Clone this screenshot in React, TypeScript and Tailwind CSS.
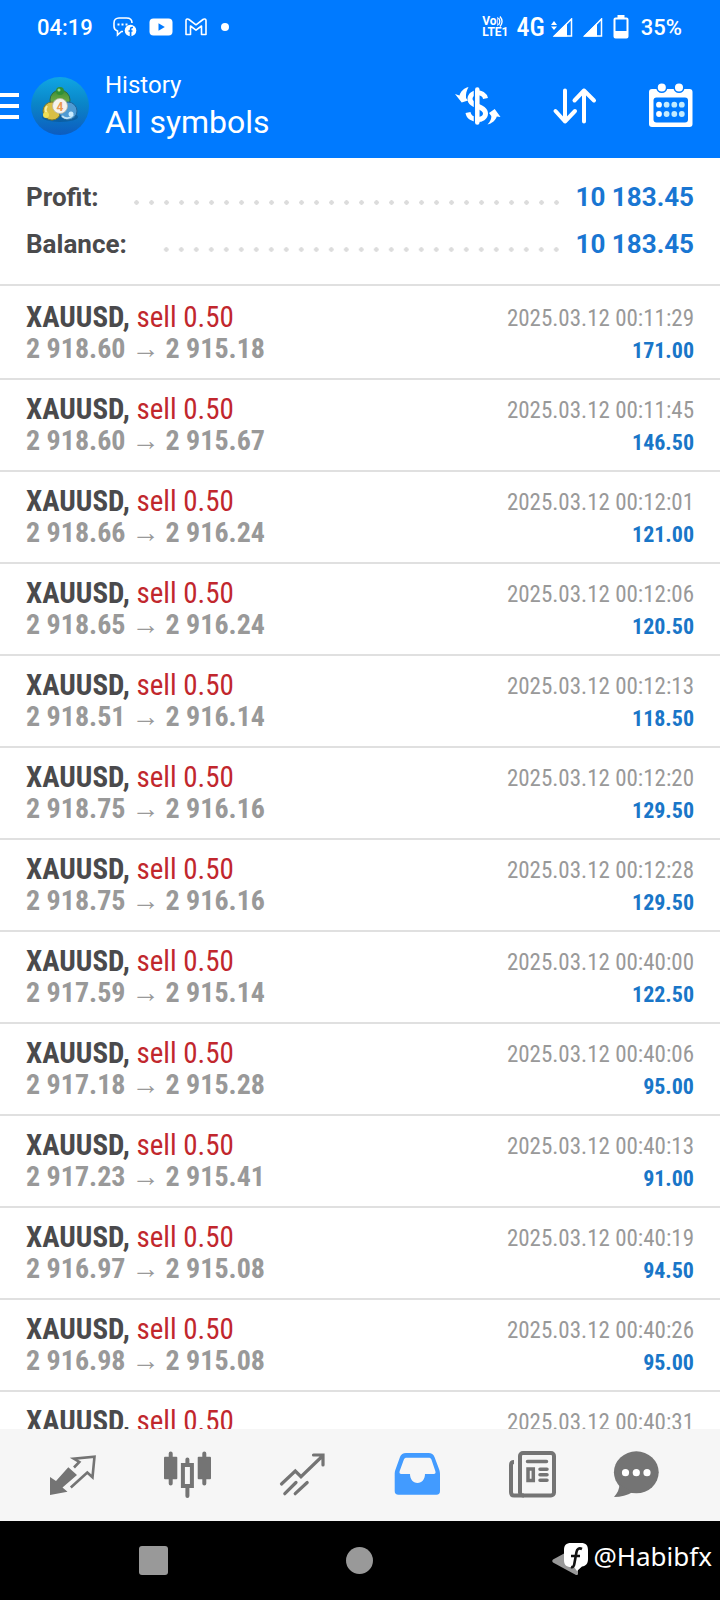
import type {ReactNode} from "react";

const deals = [
    {open: "2 918.60", close: "2 915.18", time: "2025.03.12 00:11:29", profit: "171.00"},
    {open: "2 918.60", close: "2 915.67", time: "2025.03.12 00:11:45", profit: "146.50"},
    {open: "2 918.66", close: "2 916.24", time: "2025.03.12 00:12:01", profit: "121.00"},
    {open: "2 918.65", close: "2 916.24", time: "2025.03.12 00:12:06", profit: "120.50"},
    {open: "2 918.51", close: "2 916.14", time: "2025.03.12 00:12:13", profit: "118.50"},
    {open: "2 918.75", close: "2 916.16", time: "2025.03.12 00:12:20", profit: "129.50"},
    {open: "2 918.75", close: "2 916.16", time: "2025.03.12 00:12:28", profit: "129.50"},
    {open: "2 917.59", close: "2 915.14", time: "2025.03.12 00:40:00", profit: "122.50"},
    {open: "2 917.18", close: "2 915.28", time: "2025.03.12 00:40:06", profit: "95.00"},
    {open: "2 917.23", close: "2 915.41", time: "2025.03.12 00:40:13", profit: "91.00"},
    {open: "2 916.97", close: "2 915.08", time: "2025.03.12 00:40:19", profit: "94.50"},
    {open: "2 916.98", close: "2 915.08", time: "2025.03.12 00:40:26", profit: "95.00"},
    {open: "", close: "", time: "2025.03.12 00:40:31", profit: ""},
];

function StatusBar() {
    return (
        <div className="flex h-[54px] items-center justify-between pl-[37px] pr-[38px] text-[22px] font-medium">
            <div className="flex items-center">
                <span>04:19</span>
                <svg className="ml-5" width="24" height="20" viewBox="0 0 24 20" fill="none">
                    <path d="M10 14.500H8.500L4.500 18v-4C2 13 1 12 1 9.500V6C1 3 3 1 6 1h7.500C17 1 19 3 19 6"
                          stroke="#fff" strokeWidth="1.600"/>
                    <path d="M4.500 7.500h2M8.500 7.500h2M12.500 7.500h2" stroke="#fff" strokeWidth="2"/>
                    <circle cx="17.500" cy="13.500" r="5.800" fill="#fff"/>
                    <path d="M20 10.500h-1c-1 0-1.400.6-1.400 1.500v7M15.500 14h4" stroke="#007aff" strokeWidth="1.700"/>
                </svg>
                <svg className="ml-3" width="24" height="18" viewBox="0 0 24 18">
                    <rect x="0.500" y="0.500" width="23" height="17" rx="4" fill="#fff"/>
                    <path d="M9.500 5.200v7.600l6.300-3.800z" fill="#007aff"/>
                </svg>
                <svg className="ml-3" width="22" height="18" viewBox="0 0 22 18" fill="none">
                    <path d="M1 2.500C1 1 2.800.6 4 1.500l7 5.300 7-5.300c1.200-.9 3-.5 3 1V16.500h-4.500V8L11 12.200 5.500 8v8.500H1z"
                          stroke="#fff" strokeWidth="1.600" strokeLinejoin="round"/>
                </svg>
                <span className="ml-3.5 size-2 rounded-full bg-white"/>
            </div>
            <div className="flex items-center">
                <span className="flex flex-col text-[12px] leading-[11px] font-bold">
                    <span className="flex items-center">
                        Vo
                        <svg width="6" height="11" viewBox="0 0 6 11" fill="none" stroke="#fff" strokeWidth="1.300">
                            <path d="M0 1v9M1.500 2c1.500 2 1.500 5 0 7M3 .5c2.500 3 2.500 7 0 10"/>
                        </svg>
                    </span>
                    <span>LTE1</span>
                </span>
                <span className="ml-2 font-['Roboto_Condensed','Roboto',sans-serif] text-[26px] leading-7">4G</span>
                <svg className="ml-1.5" width="22" height="19" viewBox="0 0 22 19">
                    <path d="M3 3l3 4H0zM3 12L0 8.500h6z" fill="#fff"/>
                    <path d="M3.500 18L20.500 1v17z" fill="none" stroke="#fff" strokeWidth="1.500"/>
                    <path d="M2 18.500L16 5v13.500z" fill="#fff"/>
                </svg>
                <svg className="ml-2.5" width="20" height="19" viewBox="0 0 20 19">
                    <path d="M2 18L18.500 1v17z" fill="none" stroke="#fff" strokeWidth="1.500"/>
                    <path d="M0 18.500L14 5v13.500z" fill="#fff"/>
                </svg>
                <svg className="ml-2.5" width="16" height="24" viewBox="0 0 16 24">
                    <path d="M4.500 0h7v3h-7z" fill="#fff"/>
                    <rect x="1.500" y="3.500" width="13" height="19" rx="1" fill="none" stroke="#fff" strokeWidth="2"/>
                    <path d="M1.500 16h13v6.500h-13z" fill="#fff"/>
                </svg>
                <span className="ml-3">35%</span>
            </div>
        </div>
    );
}

function Logo() {
    return (
        <svg className="ml-[11px] shrink-0" width="60" height="60" viewBox="0 0 60 60">
            <defs>
                <linearGradient id="disc" x1="0" y1="0" x2="0" y2="1">
                    <stop offset="0" stopColor="#10a6e4"/>
                    <stop offset="0.45" stopColor="#0a86c8"/>
                    <stop offset="1" stopColor="#0d5cc0"/>
                </linearGradient>
                <linearGradient id="green" x1="0" y1="0" x2="0" y2="1">
                    <stop offset="0" stopColor="#3f8c32"/>
                    <stop offset="1" stopColor="#8cc152"/>
                </linearGradient>
            </defs>
            <circle cx="30" cy="30" r="29" fill="url(#disc)"/>
            <ellipse cx="30" cy="41" rx="18" ry="5" fill="#0a4f86" opacity="0.5"/>
            <circle cx="30" cy="24" r="10" fill="url(#green)" stroke="#2c6e45"/>
            <circle cx="22" cy="35" r="9" fill="#d8bf45" stroke="#7c7a2c"/>
            <circle cx="38" cy="35" r="9" fill="#4f9bd3" stroke="#21659b"/>
            <path d="M32 40c3 3 8 3 11-1" fill="none" stroke="#bfe3f7" strokeWidth="2"/>
            <path d="M17 30c-2 3-2 5 0 7" fill="none" stroke="#f7eda0" strokeWidth="2"/>
            <circle cx="30" cy="15" r="4" fill="#2f8f36"/>
            <circle cx="29" cy="14" r="1.500" fill="#9bd98b"/>
            <circle cx="16" cy="39" r="3" fill="#f0df55"/>
            <circle cx="41" cy="38" r="2.500" fill="#c9ecff"/>
            <circle cx="30" cy="30" r="7.500" fill="#f5f3ee" stroke="#b9b7a6" strokeWidth="0.800"/>
            <text x="30" y="34.500" textAnchor="middle" fontSize="12" fontWeight="700" fill="#eb9a50">4</text>
        </svg>
    );
}

function Header() {
    return (
        <header className="flex h-[104px] items-center pr-6">
            <button aria-label="Menu" className="flex w-[19px] shrink-0 flex-col gap-[7px]">
                <span className="h-1 w-full bg-white"/>
                <span className="h-1 w-full bg-white"/>
                <span className="h-1 w-full bg-white"/>
            </button>
            <Logo/>
            <div className="ml-[15px] grow">
                <div className="text-[24px] leading-8">History</div>
                <h1 className="text-[32px] leading-[42px]">All symbols</h1>
            </div>
            <div className="flex gap-12">
                <button aria-label="Symbols">
                    <svg width="50" height="48" viewBox="0 0 50 48" fill="none">
                        <path d="M33.500 16.500C32 8.500 18 9 18 17c0 7.500 15.500 6.500 15.500 14.500 0 8-16 8.500-17.500-1"
                              stroke="#fff" strokeWidth="5"/>
                        <path d="M22.500 7v34" stroke="#007aff" strokeWidth="1.500"/>
                        <path d="M25.300 7.500v33" stroke="#fff" strokeWidth="4.500" strokeLinecap="round"/>
                        <path d="M16.500 5c-2 3.500-2.800 7-2.500 11l2 2.500-6.300 2L3 12l4.500 1.500C8.500 9.500 12 6 16.500 5z" fill="#fff"/>
                        <path d="M35.500 42.500c3-3 4-6 3.800-8.500L37 31l5.700-4L48.500 35l-3.700-.5c-1.300 4-5 7-9.300 8z" fill="#fff"/>
                    </svg>
                </button>
                <button aria-label="Sort">
                    <svg width="48" height="48" viewBox="0 0 48 48" fill="none" stroke="#fff" strokeWidth="4"
                         strokeLinecap="round" strokeLinejoin="round">
                        <path d="M15 8.500v31M5.500 29L15 39.500 25 29M34 39.500V8.500M24.500 18.500L34 8.500l10 10"/>
                    </svg>
                </button>
                <button aria-label="Period">
                    <svg width="50" height="48" viewBox="0 0 50 48">
                        <rect x="3" y="7" width="43.500" height="38" rx="3" fill="#fff"/>
                        <rect x="7.500" y="15.500" width="34.500" height="25" rx="3" fill="#007aff"/>
                        <circle cx="15.800" cy="5.500" r="4.800" fill="#fff" stroke="#007aff" strokeWidth="1.500"/>
                        <circle cx="33" cy="5.500" r="4.800" fill="#fff" stroke="#007aff" strokeWidth="1.500"/>
                        {[13, 20.6, 28.3, 35.8].map((x) => (
                            <g key={x} fill={x === 13 ? "#fff" : "#c2ebff"}>
                                <circle cx={x} cy="22.700" r="2.900"/>
                                <circle cx={x} cy="32" r="2.900"/>
                            </g>
                        ))}
                    </svg>
                </button>
            </div>
        </header>
    );
}

function SummaryRow({label, value}: { label: string; value: string }) {
    return (
        <div className="flex h-[47px] items-center text-[26px] font-bold">
            <dt className="text-[#4a4a4c]">{label}</dt>
            <span className="mt-2.5 ml-8 mr-3 h-[15px] grow bg-[radial-gradient(circle,#dcdcdc_2px,transparent_2.5px)] bg-[size:15px_15px] bg-right bg-repeat-x"/>
            <dd className="text-[#1976d2]">{value}</dd>
        </div>
    );
}

function Tab({label, active, children}: { label: string; active?: boolean; children: ReactNode }) {
    return (
        <button
            aria-label={label}
            className={`flex items-center justify-center last:flex-[92] flex-[115] ${active ? "text-[#429bff]" : "text-[#747474]"}`}
        >
            <svg width="48" height="48" viewBox="0 0 48 48" fill="none">{children}</svg>
        </button>
    );
}

export default function App() {
    return (
        <div className="flex h-screen flex-col overflow-hidden bg-white font-['Roboto',sans-serif]">
            <div className="shrink-0 bg-[#007aff] text-white">
                <StatusBar/>
                <Header/>
            </div>

            <dl className="shrink-0 border-b-2 border-[#e0e0e0] px-[26px] py-4">
                <SummaryRow label="Profit:" value="10 183.45"/>
                <SummaryRow label="Balance:" value="10 183.45"/>
            </dl>

            {/* deals */}
            <ul className="min-h-0 grow overflow-hidden pt-0.5 font-['Roboto_Condensed','Liberation_Sans_Narrow','Roboto',sans-serif]">
                {deals.map((d) => (
                    <li key={d.time}
                        className="flex h-[92px] justify-between border-b-2 border-[#e0e0e0] px-[26px] pt-[13px] leading-8">
                        <div className="whitespace-nowrap">
                            <div className="text-[29px] text-[#c1272d]">
                                <b className="text-[#4a4a4c]">XAUUSD,</b> sell 0.50
                            </div>
                            {d.open && (
                                <div className="flex gap-1.5 text-[28px] font-bold text-[#999]">
                                    <span>{d.open}</span>
                                    <span className="font-normal">→</span>
                                    <span>{d.close}</span>
                                </div>
                            )}
                        </div>
                        <div className="pt-0.5 text-right">
                            <div className="text-[23px] text-[#999]">{d.time}</div>
                            <div className="text-[22px] font-bold text-[#1976c8]">{d.profit}</div>
                        </div>
                    </li>
                ))}
            </ul>

            {/* tab bar */}
            <nav className="flex h-[92px] shrink-0 bg-[#f6f6f6] pl-3.5 pr-[38px]">
                <Tab label="Quotes">
                    <path d="M2 26l6 4 12.300-13.700L29 24 14.500 36.500l5 4.200L2 44z" fill="currentColor"/>
                    <path d="M26 16.500l5.300-5.500-5.500-3.300L46.500 5.700l-2 20.500-5.200-4.700-16.500 15"
                          stroke="currentColor" strokeWidth="2.600"/>
                </Tab>
                <Tab label="Charts">
                    <path d="M7.700 2.500v30M41.300 2.500v30M24.400 8.500v4M24.400 37v8" stroke="currentColor" strokeWidth="4" strokeLinecap="round"/>
                    <rect x="1" y="5.700" width="13.300" height="22.500" rx="1" fill="currentColor"/>
                    <rect x="34.700" y="5.700" width="13.300" height="22.500" rx="1" fill="currentColor"/>
                    <rect x="19.900" y="14" width="9" height="21" stroke="currentColor" strokeWidth="4"/>
                </Tab>
                <Tab label="Trade">
                    <path d="M3.500 33l13.800-13 5.700 5.700L45 4.500M35.500 4H45v10M6.800 42.700L18 31.500M17.200 42.700l12-11.200"
                          stroke="currentColor" strokeWidth="3.200" strokeLinecap="round"/>
                </Tab>
                <Tab label="History" active>
                    <path fill="currentColor" fillRule="evenodd"
                          d="M13 2h22.500c3 0 5 1.500 6 4l4.500 12c.7 2 1 3 1 5v17c0 2.500-1.200 3.700-3.500 3.700h-38C3 43.700 1.700 42.500 1.700 40V23c0-2 .3-3 1-5L7 6c1-2.500 3-4 6-4zm.8 4.700c-1.500 0-2.500.6-3 2L6.700 20c-.6 2 0 3 1.500 3H17c0 5 3 9 7.500 9s7.500-4 7.500-9h8.800c1.500 0 2.200-1 1.500-3L38.500 8.700c-.5-1.400-1.500-2-3-2z"/>
                </Tab>
                <Tab label="News">
                    <rect x="12" y="2" width="34" height="42.500" rx="3" stroke="currentColor" strokeWidth="4"/>
                    <path d="M6 11c-2 0-3 1-3 3v27c0 2.500 1 3.500 3 3.500h10" stroke="currentColor" strokeWidth="4"/>
                    <path d="M19.500 10.500h19M32 18.300h7M32 23.800h7M32 29.300h7" stroke="currentColor" strokeWidth="3.500" strokeLinecap="round"/>
                    <rect x="20" y="18" width="5.300" height="11.500" stroke="currentColor" strokeWidth="3.500"/>
                </Tab>
                <Tab label="Chat">
                    <ellipse cx="24.300" cy="21.300" rx="22.400" ry="21" fill="currentColor"/>
                    <path d="M7.500 33c0 5-2 9-5.500 13 7 0 13-1.500 19-5z" fill="currentColor"/>
                    <g fill="#fff">
                        <circle cx="13.500" cy="21.700" r="3.600"/>
                        <circle cx="24.300" cy="21.700" r="3.600"/>
                        <circle cx="35" cy="21.700" r="3.600"/>
                    </g>
                </Tab>
            </nav>

            {/* system navigation */}
            <div className="relative grid h-[79px] shrink-0 grid-cols-3 items-center justify-items-center bg-black px-[50px]">
                <button aria-label="Recent apps" className="size-[29px] rounded-[3px] bg-[#999]"/>
                <button aria-label="Home" className="size-[27px] rounded-full bg-[#999]"/>
                <button aria-label="Back">
                    <svg width="30" height="28" viewBox="0 0 30 28">
                        <path d="M1 12.500Q-.5 14 1 15.500L24 28q2 .5 2-1.500V1.500Q26-.5 24 0z" fill="#999"/>
                    </svg>
                </button>
                <div className="absolute right-2 top-4 flex items-center gap-1 font-['Noto_Sans',sans-serif] text-[26px] text-white">
                    <svg width="26" height="30" viewBox="0 0 26 30">
                        <path d="M8 1h10c5 0 7 2.500 7 7v9c0 4.500-2 7-6 7.500L14 29l-3-4H8c-5 0-7-2.500-7-7V8c0-4.500 2-7 7-7z" fill="#fff"/>
                        <path d="M19 7c-3-1.500-5 0-5.500 3l-2.200 12c-.4 2.500-1.500 3.500-3.300 3M8 14h9" fill="none" stroke="#111" strokeWidth="2.600"/>
                    </svg>
                    <span>@Habibfx</span>
                </div>
            </div>
        </div>
    );
}
